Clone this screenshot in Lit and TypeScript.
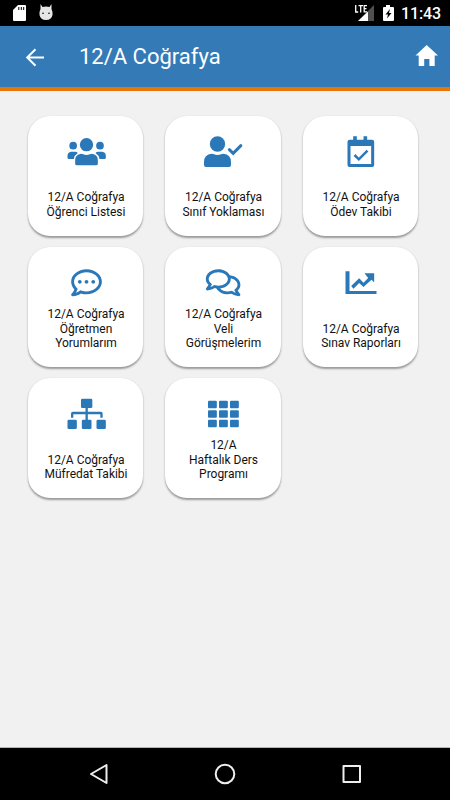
import { LitElement, html, svg, css } from "lit";
import { customElement } from "lit/decorators.js";

interface Tile {
  lines: string[];
  icon: unknown;
}

const users = svg`<svg class="icon" viewBox="130.5 87 132 108">
  <circle cx="198" cy="119" r="20"/><circle cx="158" cy="122" r="11.5"/><circle cx="238.500" cy="122" r="11.500"/>
  <path d="M182 146q3 0 6 2q10 4 20 0q3-2 6-2q18 2 18 20v10q0 5-5 5h-58q-5 0-5-5v-10q0-18 18-20z"/>
  <path d="M152 140h12q5 0 8 4q-10 6-12 18h-15q-4 0-4-4v-5q0-12 11-13z"/>
  <path d="M245 140h-12q-5 0-8 4q10 6 12 18h15q4 0 4-4v-5q0-12-11-13z"/>
</svg>`;

const userCheck = svg`<svg class="icon" viewBox="138 87 132 108">
  <circle cx="187.500" cy="117" r="23"/>
  <path d="M170 146q4 0 7 2q10 4 21 0q3-2 7-2q23 2 23 25v9q0 6-6 6h-69q-6 0-6-6v-9q0-23 23-25z"/>
  <path class="line" stroke-width="9" stroke-linecap="round" stroke-linejoin="miter" d="M223 134l11.500 11l23-23"/>
</svg>`;

const calendar = svg`<svg class="icon" viewBox="145.5 87 132 108">
  <path fill-rule="evenodd" d="M188 94h11v10h20v-10h11v10h15q6 0 6 6v70q0 6-6 6h-68q-6 0-6-6v-70q0-6 6-6h11zM180 123v54h62v-54z"/>
  <path class="line" stroke-width="7.500" stroke-linejoin="miter" d="M192 150l13 13l26-26"/>
</svg>`;

const comment = svg`<svg class="icon" viewBox="130.5 75 132 108">
  <path transform="translate(152 82.200) scale(.18)" d="M144 208c-17.700 0-32 14.300-32 32s14.300 32 32 32 32-14.300 32-32-14.300-32-32-32zm112 0c-17.700 0-32 14.300-32 32s14.300 32 32 32 32-14.300 32-32-14.300-32-32-32zm112 0c-17.700 0-32 14.300-32 32s14.300 32 32 32 32-14.300 32-32-14.300-32-32-32zM256 32C114.600 32 0 125.100 0 240c0 47.600 19.900 91.200 52.900 126.300C38 405.700 7 439.100 6.500 439.500c-6.600 7-8.400 17.200-4.600 26S14.400 480 24 480c61.500 0 110-25.700 139.100-46.300C192 442.800 223.200 448 256 448c141.400 0 256-93.100 256-208S397.400 32 256 32zm0 368c-26.700 0-53.100-4.100-78.400-12.100l-22.700-7.200-19.500 13.800c-14.300 10.100-33.900 21.400-57.500 29 7.300-12.100 14.400-25.700 19.900-40.200l10.600-28.100-20.600-21.800C69.700 314.100 48 282.200 48 240c0-88.200 93.300-160 208-160s208 71.800 208 160-93.300 160-208 160z"/>
</svg>`;

const comments = svg`<svg class="icon" viewBox="138 75 132 108">
  <path transform="translate(152.500 82.200) scale(.18)" d="M532 386.200c27.500-27.100 44-61.100 44-98.200 0-80-76.500-146.100-176.200-157.900C368.300 72.500 294.300 32 208 32 93.100 32 0 103.600 0 192c0 37 16.500 71 44 98.200-15.300 30.700-37.300 54.500-37.700 54.900-6.300 6.700-8.100 16.500-4.400 25 3.600 8.500 12 14 21.200 14 53.500 0 96.700-20.200 125.200-38.800 9.200 2.100 18.700 3.700 28.400 4.900C208.100 407.600 281.800 448 368 448c20.800 0 40.800-2.400 59.800-6.800C456.300 459.700 499.400 480 553 480c9.200 0 17.500-5.500 21.200-14 3.600-8.500 1.900-18.300-4.400-25-.4-.3-22.500-24.100-37.800-54.800zm-392.800-92.300L122.100 305c-14.100 9.100-28.500 16.300-43.100 21.400 2.700-4.700 5.400-9.700 8-14.800l15.500-31.100L77.700 256C64.200 242.600 48 220.700 48 192c0-60.700 73.300-112 160-112s160 51.300 160 112-73.300 112-160 112c-16.500 0-33-1.900-49-5.600l-19.800-4.500zM498.300 352l-24.700 24.400 15.500 31.100c2.600 5.100 5.300 10.100 8 14.800-14.600-5.100-29-12.300-43.100-21.400l-17.100-11.100-19.900 4.600c-16 3.700-32.500 5.600-49 5.600-54 0-102.200-20.100-131.300-49.700C338 339.500 416 272.900 416 192c0-3.400-.4-6.700-.7-10C479.700 196.500 528 238.800 528 288c0 28.700-16.200 50.600-29.700 64z"/>
</svg>`;

const chart = svg`<svg class="icon" viewBox="145.5 75 132 108">
  <path d="M165 94h12v59h81v9h-93z"/>
  <path d="M222 100h29v27l-8-8l-24 22l-13-12l-17 17l-7-8l24-23l13 13l14-14z"/>
</svg>`;

const sitemap = svg`<svg class="icon" viewBox="130.5 79 132 108">
  <rect x="181.500" y="87" width="34" height="28" rx="4"/>
  <path class="line" stroke-width="7" d="M198.500 113v40M155 144v-12q0-2 2-2h84q2 0 2 2v12"/>
  <rect x="141" y="150" width="28" height="28" rx="4"/>
  <rect x="184" y="150" width="29" height="28" rx="4"/>
  <rect x="228" y="150" width="28" height="28" rx="4"/>
</svg>`;

const gridIcon = svg`<svg class="icon" viewBox="138 79 132 108">
  ${[93, 121.5, 150].map((y) =>
    [159, 192, 225].map(
      (x) => svg`<rect x=${x} y=${y} width="26.500" height="22.500" rx="3"/>`
    )
  )}
</svg>`;

const tiles: Tile[] = [
  { lines: ["12/A Coğrafya", "Öğrenci Listesi"], icon: users },
  { lines: ["12/A Coğrafya", "Sınıf Yoklaması"], icon: userCheck },
  { lines: ["12/A Coğrafya", "Ödev Takibi"], icon: calendar },
  { lines: ["12/A Coğrafya", "Öğretmen", "Yorumlarım"], icon: comment },
  { lines: ["12/A Coğrafya", "Veli", "Görüşmelerim"], icon: comments },
  { lines: ["12/A Coğrafya", "Sınav Raporları"], icon: chart },
  { lines: ["12/A Coğrafya", "Müfredat Takibi"], icon: sitemap },
  { lines: ["12/A", "Haftalık Ders", "Programı"], icon: gridIcon },
];

@customElement("app-root")
export class AppRoot extends LitElement {
  static styles = css`
    :host {
      display: flex;
      flex-direction: column;
      width: 450px;
      height: 800px;
      overflow: hidden;
      background: #f1f1f1;
      font-family: Roboto, "Noto Sans", sans-serif;
    }
    svg {
      display: block;
      flex: none;
    }
    .status {
      display: flex;
      align-items: center;
      justify-content: space-between;
      height: 26px;
      background: #000;
      color: #fff;
      flex: none;
    }
    .clock {
      font-size: 16px;
      font-weight: 500;
      line-height: 24px;
      padding: 2px 9px 0 0;
      box-sizing: border-box;
      height: 26px;
      letter-spacing: -0.1px;
    }
    .right {
      display: flex;
      gap: 6px;
    }
    .header {
      display: flex;
      align-items: center;
      height: 65px;
      box-sizing: border-box;
      padding: 0 11px 0 25px;
      background: #337ab7;
      border-bottom: 4px solid #e47708;
      color: #fff;
      flex: none;
    }
    .title {
      flex: 1;
      margin: 0 0 0 32px;
      font-size: 22px;
      font-weight: 400;
      line-height: 28px;
    }
    .home {
      margin-bottom: 2px;
    }
    .content {
      flex: 1;
      display: grid;
      grid-template-columns: 115px 116px 115px;
      grid-auto-rows: 120px;
      gap: 11.200px 22px;
      padding: 25px 28px 0;
      align-content: start;
    }
    .tile {
      display: flex;
      flex-direction: column;
      align-items: center;
      justify-content: space-between;
      box-sizing: border-box;
      padding: 18px 0 17px;
      border-radius: 22px;
      background: #fff;
      box-shadow: 0 1.500px 2px rgba(0, 0, 0, 0.36);
    }
    .icon {
      width: 44px;
      height: 36px;
      fill: #2b78b9;
      margin-bottom: -10px;
    }
    .line {
      fill: none;
      stroke: #2b78b9;
    }
    .label {
      font-size: 12px;
      line-height: 14.300px;
      letter-spacing: -0.02px;
      padding-left: 1px;
      text-align: center;
      color: #111;
      white-space: nowrap;
    }
    .nav {
      background: #000;
      border-top: 1px solid #b5b5b5;
      box-sizing: border-box;
      height: 53px;
      flex: none;
    }
  `;

  render() {
    return html`
      <div class="status">
        <svg width="60" height="26" viewBox="0 0 60 26">
          <path fill="#fff" d="M18 5h7q1 0 1 1v14q0 1-1 1h-11q-1 0-1-1v-10z" />
          <path stroke="#000" stroke-width="1" d="M18.800 7v3M21.300 7v3M23.700 7v3" />
          <path fill="#e6e6e6" d="M40.500 4l2 3q3.500-1 7 0l2-3v5l1 3v3q-1 5-6.500 5t-6.500-5v-3l1-3z" />
          <circle cx="43" cy="13.300" r=".8" /><circle cx="49" cy="13.300" r=".8" />
        </svg>
        <div class="right">
          <svg width="41" height="26" viewBox="355 0 41 26">
            <path fill="#505050" d="M375 5v16h-16z" />
            <path fill="#fff" d="M369 11.500v9.500h-10z" />
            <path fill="#000" d="M355 4h12v8h-12z" />
            <path fill="none" stroke="#fff" stroke-width="1.300" d="M356.700 5v7h2.500M359.500 5.700h4.500M361.700 5.700v6.800M368 5.700h-2.800v6.100h2.800M365.500 8.700h2" />
            <path fill="#fff" d="M387 5h4v2h3q1 0 1 1v12q0 1-1 1h-9q-1 0-1-1v-12q0-1 1-1h2z" />
            <path d="M391 9l-4.500 5.500h2.500l-1 4 4.500-5.500h-2.500z" />
          </svg>
          <div class="clock">11:43</div>
        </div>
      </div>
      <div class="header">
        <svg width="22" height="20" viewBox="25 46.500 22 20">
          <path fill="none" stroke="#fff" stroke-width="2" d="M44 57h-16.500M35.500 48.700l-8.300 8.300l8.300 8.300" />
        </svg>
        <h1 class="title">12/A Coğrafya</h1>
        <svg class="home" width="24" height="24" viewBox="415 44 24 24">
          <path fill="#fff" d="M426.700 45l11.300 10.500h-3.300v10.500h-5.300v-7h-5.200v7h-5.500v-10.500h-3.200z" />
        </svg>
      </div>
      <main class="content">
        ${tiles.map(
          (t) => html`<div class="tile">
            ${t.icon}
            <div class="label">${t.lines.map((l) => html`<div>${l}</div>`)}</div>
          </div>`
        )}
      </main>
      <svg class="nav" width="450" height="52" viewBox="0 748 450 52">
        <g fill="none" stroke="#eee" stroke-width="2" stroke-linejoin="round">
          <path d="M106.500 765v18l-15.500-9z" />
          <circle cx="225" cy="774" r="9.300" />
          <rect x="343.500" y="766" width="16.500" height="16" />
        </g>
      </svg>
    `;
  }
}
